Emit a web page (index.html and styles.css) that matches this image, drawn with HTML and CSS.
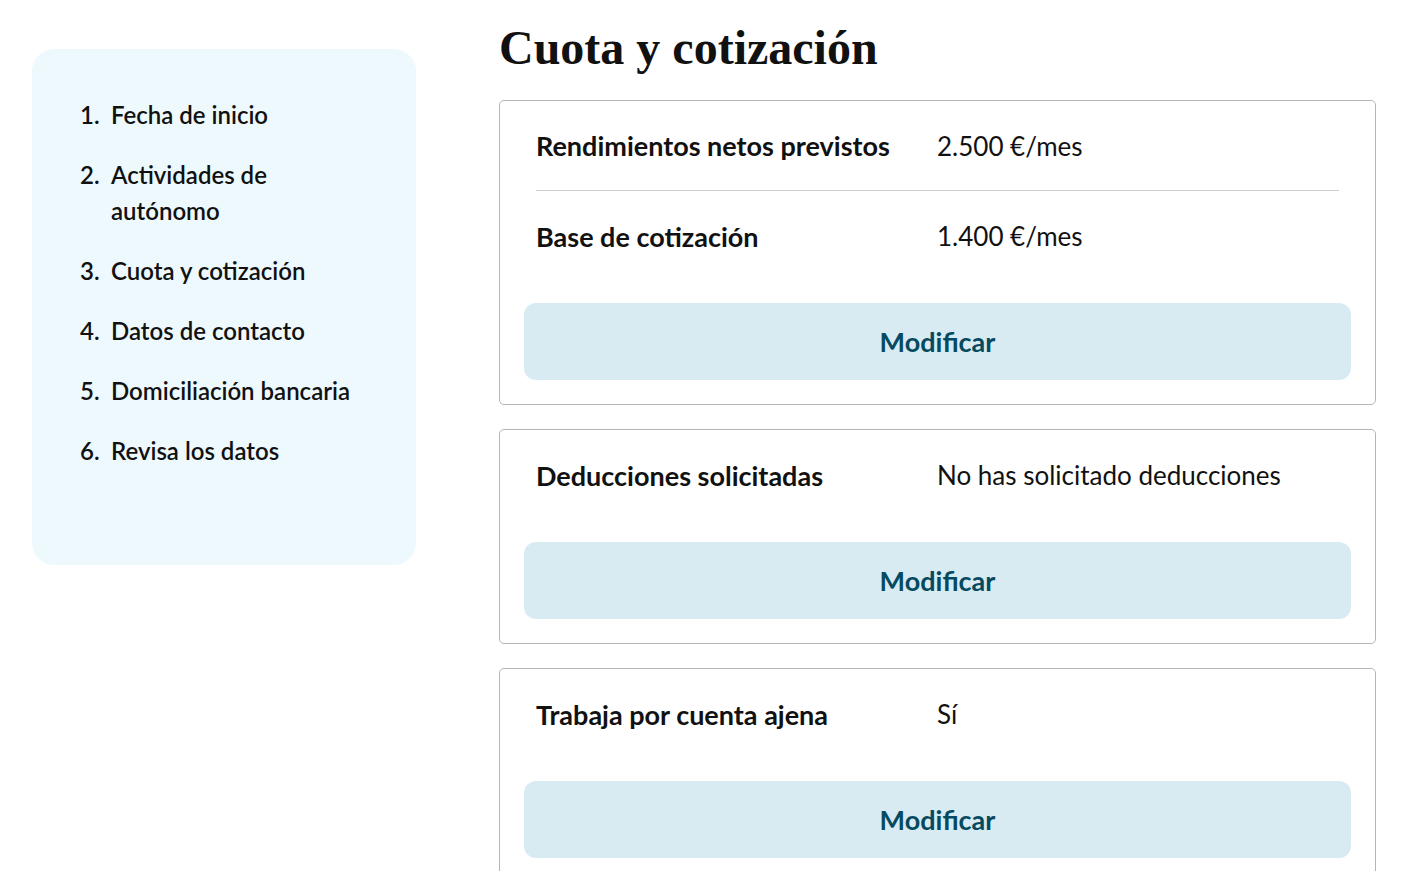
FILE: index.html
```html
<!DOCTYPE html>
<html lang="es">
<head>
<meta charset="utf-8">
<title>Cuota y cotización</title>
<link rel="stylesheet" href="styles.css">
</head>
<body>
<div class="page">
  <nav class="sidebar">
    <ol class="steps">
      <li>Fecha de inicio</li>
      <li>Actividades de autónomo</li>
      <li>Cuota y cotización</li>
      <li>Datos de contacto</li>
      <li>Domiciliación bancaria</li>
      <li>Revisa los datos</li>
    </ol>
  </nav>
  <main class="main">
    <h1 class="title">Cuota y cotización</h1>
    <section class="card">
      <div class="row row-sep">
        <span class="label">Rendimientos netos previstos</span>
        <span class="value">2.500 €/mes</span>
      </div>
      <div class="row">
        <span class="label">Base de cotización</span>
        <span class="value">1.400 €/mes</span>
      </div>
      <button class="btn" type="button">Modificar</button>
    </section>
    <section class="card">
      <div class="row">
        <span class="label">Deducciones solicitadas</span>
        <span class="value">No has solicitado deducciones</span>
      </div>
      <button class="btn" type="button">Modificar</button>
    </section>
    <section class="card">
      <div class="row">
        <span class="label">Trabaja por cuenta ajena</span>
        <span class="value">Sí</span>
      </div>
      <button class="btn" type="button">Modificar</button>
    </section>
  </main>
</div>
</body>
</html>
```

FILE: styles.css
```css
html, body {
  margin: 0;
  padding: 0;
  background: #ffffff;
}
body {
  font-family: Lato, "Open Sans", "Liberation Sans", sans-serif;
  color: #111111;
}
.page {
  display: flex;
  align-items: flex-start;
  gap: 83px;
  padding: 0 29px 0 32px;
}
.sidebar {
  flex: 0 0 384px;
  box-sizing: border-box;
  margin-top: 49px;
  background: #eef9fd;
  border-radius: 22px;
  padding: 48px 48px 96px 48px;
}
.steps {
  margin: 0;
  padding: 0;
  list-style: none;
  counter-reset: step;
  display: flex;
  flex-direction: column;
  gap: 24px;
}
.steps li {
  counter-increment: step;
  display: grid;
  grid-template-columns: 31px 1fr;
  font-size: 24px;
  line-height: 36px;
  font-weight: 600;
  color: #111111;
}
.steps li::before {
  content: counter(step) ".";
}
.main {
  flex: 1 1 auto;
  display: flex;
  flex-direction: column;
  gap: 24px;
}
.title {
  font-family: "Liberation Serif", "DejaVu Serif", serif;
  font-weight: 700;
  font-size: 48px;
  line-height: 56px;
  margin: 20px 0 0 0;
  color: #111111;
}
.card {
  border: 1px solid #b5b5b5;
  border-radius: 5px;
  padding: 0 24px 24px;
  display: flex;
  flex-direction: column;
}
.row {
  display: flex;
  align-items: center;
  min-height: 90px;
  margin: 0 12px;
  font-size: 26px;
}
.row-sep {
  min-height: 89px;
  border-bottom: 1px solid #cfcfcf;
}
.label {
  flex: 0 0 401px;
  font-weight: 700;
  font-size: 27px;
}
.value {
  font-weight: 400;
}
.btn {
  margin-top: 22px;
  height: 77px;
  border: none;
  border-radius: 12px;
  background: #d8ebf3;
  color: #064a60;
  font-family: Lato, "Open Sans", "Liberation Sans", sans-serif;
  font-size: 27px;
  font-weight: 700;
  cursor: pointer;
}
```
